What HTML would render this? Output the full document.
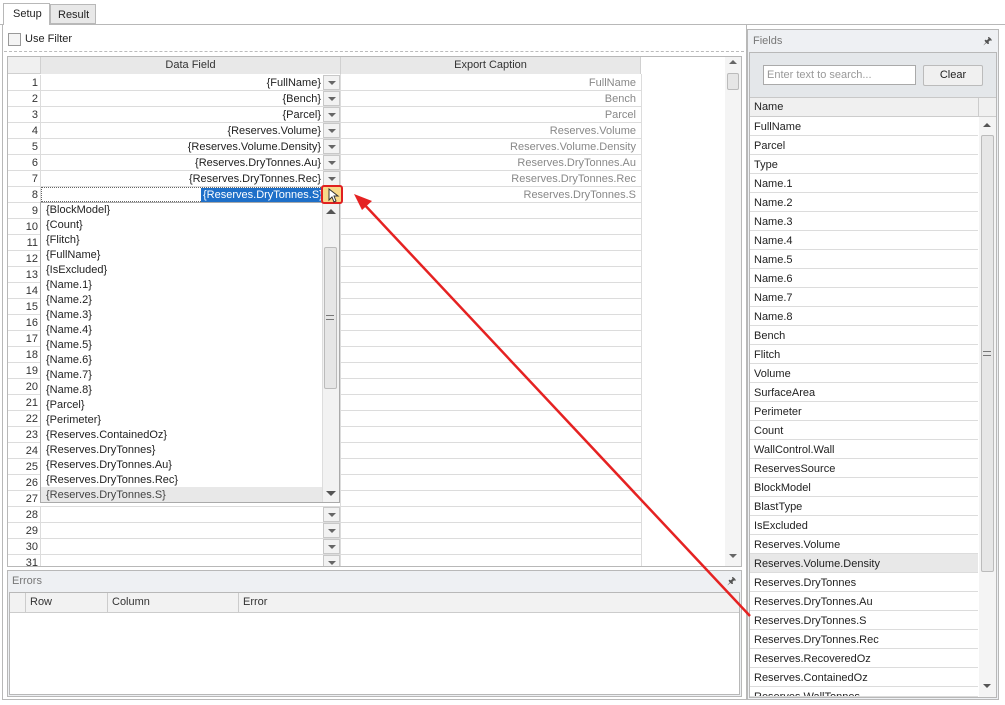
<!DOCTYPE html>
<html><head><meta charset="utf-8"><style>
*{box-sizing:border-box;margin:0;padding:0}
body{width:1005px;height:705px;background:#fff;font-family:"Liberation Sans",sans-serif;font-size:11px;color:#222;position:relative;overflow:hidden}
.a{position:absolute}
.r{position:absolute;left:8px;width:633px;height:16px;border-bottom:1px solid #dcdcdc}
.r .n{position:absolute;left:0;width:32px;text-align:right;padding-right:2px;top:2px;color:#333}
.r .d{position:absolute;left:32px;width:283px;text-align:right;top:2px;padding-right:2px}
.r .b{position:absolute;left:315px;top:0;width:17px;height:15px;border:1px solid #c8c8c8;background:#f2f2f2}
.r .b:after{content:"";position:absolute;left:4px;top:5px;border-left:4px solid transparent;border-right:4px solid transparent;border-top:4px solid #666}
.r .e{position:absolute;left:332px;width:298px;text-align:right;top:2px;color:#888;padding-right:2px}
.r .v1{position:absolute;left:32px;top:0;height:16px;border-left:1px solid #dcdcdc}
.li{position:absolute;left:46px;height:15px}
.f{position:absolute;left:750px;width:228px;height:19px;border-bottom:1px solid #dcdcdc;padding:4px 0 0 4px}
</style></head><body>
<!-- tabs -->
<div class="a" style="left:0;top:24px;width:1005px;height:1px;background:#b8b8b8"></div>
<div class="a" style="left:3px;top:3px;width:47px;height:22px;border:1px solid #b8b8b8;border-bottom:none;background:#fff;padding:4px 0 0 9px">Setup</div>
<div class="a" style="left:50px;top:4px;width:46px;height:20px;border:1px solid #b8b8b8;background:#e8e8e8;padding:4px 0 0 7px">Result</div>
<div class="a" style="left:2px;top:24px;width:745px;height:676px;border:1px solid #b8b8b8;border-top:none"></div>
<div class="a" style="left:8px;top:33px;width:13px;height:13px;border:1px solid #999;background:#f4f4f4"></div>
<div class="a" style="left:25px;top:33px">Use Filter</div>
<div class="a" style="left:4px;top:51px;width:740px;border-top:1px dashed #bbb"></div>
<!-- grid -->
<div class="a" style="left:7px;top:56px;width:735px;height:511px;border:1px solid #b8b8b8;background:#fff"></div>
<div class="a" style="left:8px;top:57px;width:633px;height:17px;background:#f0f0f0;border-bottom:1px solid #d0d0d0"></div>
<div class="a" style="left:40px;top:57px;width:300px;height:17px;background:#e8e8e8;text-align:center;padding-top:2px;color:#333;border-left:1px solid #d0d0d0">Data Field</div>
<div class="a" style="left:340px;top:57px;width:301px;height:17px;background:#e8e8e8;text-align:center;padding-top:2px;color:#333;border-left:1px solid #d0d0d0;border-right:1px solid #d0d0d0">Export Caption</div>
<div class="a" style="left:641px;top:74px;width:1px;height:492px;background:#dcdcdc"></div>
<div class="a" style="left:340px;top:74px;width:1px;height:492px;background:#dcdcdc"></div>
<div class="a" style="left:725px;top:57px;width:16px;height:509px;background:#f4f4f4"></div>
<div class="a" style="left:727px;top:73px;width:12px;height:17px;border:1px solid #bbb;background:#e6e6e6;border-radius:2px"></div>
<div class="a" style="left:729px;top:60px;border-left:4px solid transparent;border-right:4px solid transparent;border-bottom:4px solid #666"></div>
<div class="a" style="left:729px;top:554px;border-left:4px solid transparent;border-right:4px solid transparent;border-top:4px solid #666"></div>

<div class="r" style="top:75px"><span class="v1"></span><span class="n">1</span><span class="d">{FullName}</span><span class="b"></span><span class="e">FullName</span></div>
<div class="r" style="top:91px"><span class="v1"></span><span class="n">2</span><span class="d">{Bench}</span><span class="b"></span><span class="e">Bench</span></div>
<div class="r" style="top:107px"><span class="v1"></span><span class="n">3</span><span class="d">{Parcel}</span><span class="b"></span><span class="e">Parcel</span></div>
<div class="r" style="top:123px"><span class="v1"></span><span class="n">4</span><span class="d">{Reserves.Volume}</span><span class="b"></span><span class="e">Reserves.Volume</span></div>
<div class="r" style="top:139px"><span class="v1"></span><span class="n">5</span><span class="d">{Reserves.Volume.Density}</span><span class="b"></span><span class="e">Reserves.Volume.Density</span></div>
<div class="r" style="top:155px"><span class="v1"></span><span class="n">6</span><span class="d">{Reserves.DryTonnes.Au}</span><span class="b"></span><span class="e">Reserves.DryTonnes.Au</span></div>
<div class="r" style="top:171px"><span class="v1"></span><span class="n">7</span><span class="d">{Reserves.DryTonnes.Rec}</span><span class="b"></span><span class="e">Reserves.DryTonnes.Rec</span></div>
<div class="r" style="top:187px"><span class="v1"></span><span class="n">8</span><span class="e">Reserves.DryTonnes.S</span></div>
<div class="a" style="left:41px;top:187px;width:282px;height:15px;border:1px dotted #666"></div>
<div class="a" style="left:201px;top:188px;width:120px;height:14px;background:#1e6fc8;color:#fff;padding:1px 0 0 2px">{Reserves.DryTonnes.S}</div>
<div class="r" style="top:203px"><span class="n">9</span></div>
<div class="r" style="top:219px"><span class="n">10</span></div>
<div class="r" style="top:235px"><span class="n">11</span></div>
<div class="r" style="top:251px"><span class="n">12</span></div>
<div class="r" style="top:267px"><span class="n">13</span></div>
<div class="r" style="top:283px"><span class="n">14</span></div>
<div class="r" style="top:299px"><span class="n">15</span></div>
<div class="r" style="top:315px"><span class="n">16</span></div>
<div class="r" style="top:331px"><span class="n">17</span></div>
<div class="r" style="top:347px"><span class="n">18</span></div>
<div class="r" style="top:363px"><span class="n">19</span></div>
<div class="r" style="top:379px"><span class="n">20</span></div>
<div class="r" style="top:395px"><span class="n">21</span></div>
<div class="r" style="top:411px"><span class="n">22</span></div>
<div class="r" style="top:427px"><span class="n">23</span></div>
<div class="r" style="top:443px"><span class="n">24</span></div>
<div class="r" style="top:459px"><span class="n">25</span></div>
<div class="r" style="top:475px"><span class="n">26</span></div>
<div class="r" style="top:491px"><span class="n">27</span></div>
<div class="r" style="top:507px"><span class="v1"></span><span class="n">28</span><span class="b"></span></div>
<div class="r" style="top:523px"><span class="v1"></span><span class="n">29</span><span class="b"></span></div>
<div class="r" style="top:539px"><span class="v1"></span><span class="n">30</span><span class="b"></span></div>
<div class="r" style="top:555px;height:11px;overflow:hidden;border:none"><span class="v1"></span><span class="n">31</span><span class="b"></span></div>

<!-- dropdown list -->
<div class="a" style="left:40px;top:202px;width:300px;height:301px;border:1px solid #aaa;background:#fff"></div>
<div class="a" style="left:41px;top:487px;width:281px;height:15px;background:#e8e8e8"></div>
<div class="a" style="left:322px;top:203px;width:17px;height:299px;background:#f2f2f2;border-left:1px solid #ddd"></div>
<div class="a" style="left:324px;top:247px;width:13px;height:142px;border:1px solid #bbb;background:#e6e6e6;border-radius:2px"></div>
<div class="a" style="left:326px;top:315px;width:8px;height:5px;border-top:1px solid #777;border-bottom:1px solid #777"></div>
<div class="a" style="left:326px;top:209px;border-left:5px solid transparent;border-right:5px solid transparent;border-bottom:5px solid #555"></div>
<div class="a" style="left:326px;top:491px;border-left:5px solid transparent;border-right:5px solid transparent;border-top:5px solid #555"></div>
<div class="li" style="top:204px">{BlockModel}</div>
<div class="li" style="top:219px">{Count}</div>
<div class="li" style="top:234px">{Flitch}</div>
<div class="li" style="top:249px">{FullName}</div>
<div class="li" style="top:264px">{IsExcluded}</div>
<div class="li" style="top:279px">{Name.1}</div>
<div class="li" style="top:294px">{Name.2}</div>
<div class="li" style="top:309px">{Name.3}</div>
<div class="li" style="top:324px">{Name.4}</div>
<div class="li" style="top:339px">{Name.5}</div>
<div class="li" style="top:354px">{Name.6}</div>
<div class="li" style="top:369px">{Name.7}</div>
<div class="li" style="top:384px">{Name.8}</div>
<div class="li" style="top:399px">{Parcel}</div>
<div class="li" style="top:414px">{Perimeter}</div>
<div class="li" style="top:429px">{Reserves.ContainedOz}</div>
<div class="li" style="top:444px">{Reserves.DryTonnes}</div>
<div class="li" style="top:459px">{Reserves.DryTonnes.Au}</div>
<div class="li" style="top:474px">{Reserves.DryTonnes.Rec}</div>
<div class="li" style="top:489px;color:#444">{Reserves.DryTonnes.S}</div>

<!-- highlighted button -->
<div class="a" style="left:321px;top:185px;width:22px;height:19px;border:2px solid #e02020;border-radius:3px;background:#f8d98a"></div>
<svg class="a" style="left:328px;top:188px" width="14" height="16"><path d="M1 1 L1 12 L4 9 L6 14 L8 13 L6 8 L10 8 Z" fill="#fff" stroke="#333" stroke-width="1"/></svg>

<!-- Errors -->
<div class="a" style="left:7px;top:570px;width:735px;height:127px;border:1px solid #b8b8b8;background:#eef0f3"></div>
<div class="a" style="left:12px;top:575px;color:#777">Errors</div>
<div class="a" style="left:727px;top:574px;font-size:10px;color:#555">🖈</div>
<div class="a" style="left:9px;top:592px;width:731px;height:103px;border:1px solid #b8b8b8;background:#fff"></div>
<div class="a" style="left:10px;top:593px;width:729px;height:20px;background:#f2f2f2;border-bottom:1px solid #ccc"></div>
<div class="a" style="left:25px;top:593px;width:83px;height:20px;border-left:1px solid #ccc;padding:3px 0 0 4px;color:#333">Row</div>
<div class="a" style="left:107px;top:593px;width:131px;height:20px;border-left:1px solid #ccc;padding:3px 0 0 4px;color:#333">Column</div>
<div class="a" style="left:238px;top:593px;width:200px;height:20px;border-left:1px solid #ccc;padding:3px 0 0 4px;color:#333">Error</div>

<!-- Fields panel -->
<div class="a" style="left:747px;top:29px;width:252px;height:671px;border:1px solid #b8b8b8;background:#eef0f3"></div>
<div class="a" style="left:753px;top:35px;color:#777">Fields</div>
<div class="a" style="left:983px;top:34px;font-size:10px;color:#555">🖈</div>
<div class="a" style="left:749px;top:52px;width:248px;height:646px;border:1px solid #b8b8b8;background:#e4e7ea"></div>
<div class="a" style="left:763px;top:65px;width:153px;height:20px;border:1px solid #aaa;background:#fff;padding:3px 0 0 3px;color:#999">Enter text to search...</div>
<div class="a" style="left:923px;top:65px;width:60px;height:21px;border:1px solid #bbb;border-radius:2px;background:#f0f0f0;text-align:center;padding-top:3px">Clear</div>
<div class="a" style="left:750px;top:97px;width:246px;height:600px;background:#fff;border-top:1px solid #c8c8c8"></div>
<div class="a" style="left:750px;top:98px;width:246px;height:19px;background:#f0f0f0;border-bottom:1px solid #ccc;padding:3px 0 0 4px">Name</div>
<div class="a" style="left:978px;top:98px;width:1px;height:19px;background:#ccc"></div>
<div class="a" style="left:979px;top:117px;width:17px;height:580px;background:#f4f4f4"></div>
<div class="a" style="left:981px;top:135px;width:13px;height:437px;border:1px solid #bbb;background:#e6e6e6;border-radius:2px"></div>
<div class="a" style="left:983px;top:351px;width:8px;height:5px;border-top:1px solid #777;border-bottom:1px solid #777"></div>
<div class="a" style="left:983px;top:123px;border-left:4px solid transparent;border-right:4px solid transparent;border-bottom:4px solid #555"></div>
<div class="a" style="left:983px;top:684px;border-left:4px solid transparent;border-right:4px solid transparent;border-top:4px solid #555"></div>
<div class="f" style="top:117px">FullName</div>
<div class="f" style="top:136px">Parcel</div>
<div class="f" style="top:155px">Type</div>
<div class="f" style="top:174px">Name.1</div>
<div class="f" style="top:193px">Name.2</div>
<div class="f" style="top:212px">Name.3</div>
<div class="f" style="top:231px">Name.4</div>
<div class="f" style="top:250px">Name.5</div>
<div class="f" style="top:269px">Name.6</div>
<div class="f" style="top:288px">Name.7</div>
<div class="f" style="top:307px">Name.8</div>
<div class="f" style="top:326px">Bench</div>
<div class="f" style="top:345px">Flitch</div>
<div class="f" style="top:364px">Volume</div>
<div class="f" style="top:383px">SurfaceArea</div>
<div class="f" style="top:402px">Perimeter</div>
<div class="f" style="top:421px">Count</div>
<div class="f" style="top:440px">WallControl.Wall</div>
<div class="f" style="top:459px">ReservesSource</div>
<div class="f" style="top:478px">BlockModel</div>
<div class="f" style="top:497px">BlastType</div>
<div class="f" style="top:516px">IsExcluded</div>
<div class="f" style="top:535px">Reserves.Volume</div>
<div class="f" style="top:554px;background:#e8e8e8">Reserves.Volume.Density</div>
<div class="f" style="top:573px">Reserves.DryTonnes</div>
<div class="f" style="top:592px">Reserves.DryTonnes.Au</div>
<div class="f" style="top:611px">Reserves.DryTonnes.S</div>
<div class="f" style="top:630px">Reserves.DryTonnes.Rec</div>
<div class="f" style="top:649px">Reserves.RecoveredOz</div>
<div class="f" style="top:668px">Reserves.ContainedOz</div>
<div class="f" style="top:687px;height:10px;overflow:hidden">Reserves.WallTonnes</div>

<!-- red arrow -->
<svg class="a" style="left:0;top:0" width="1005" height="705">
<line x1="750" y1="616" x2="362" y2="202" stroke="#e52222" stroke-width="2.5"/>
<path d="M354 194 L372 201 L362 210 Z" fill="#e52222"/>
</svg>
</body></html>
